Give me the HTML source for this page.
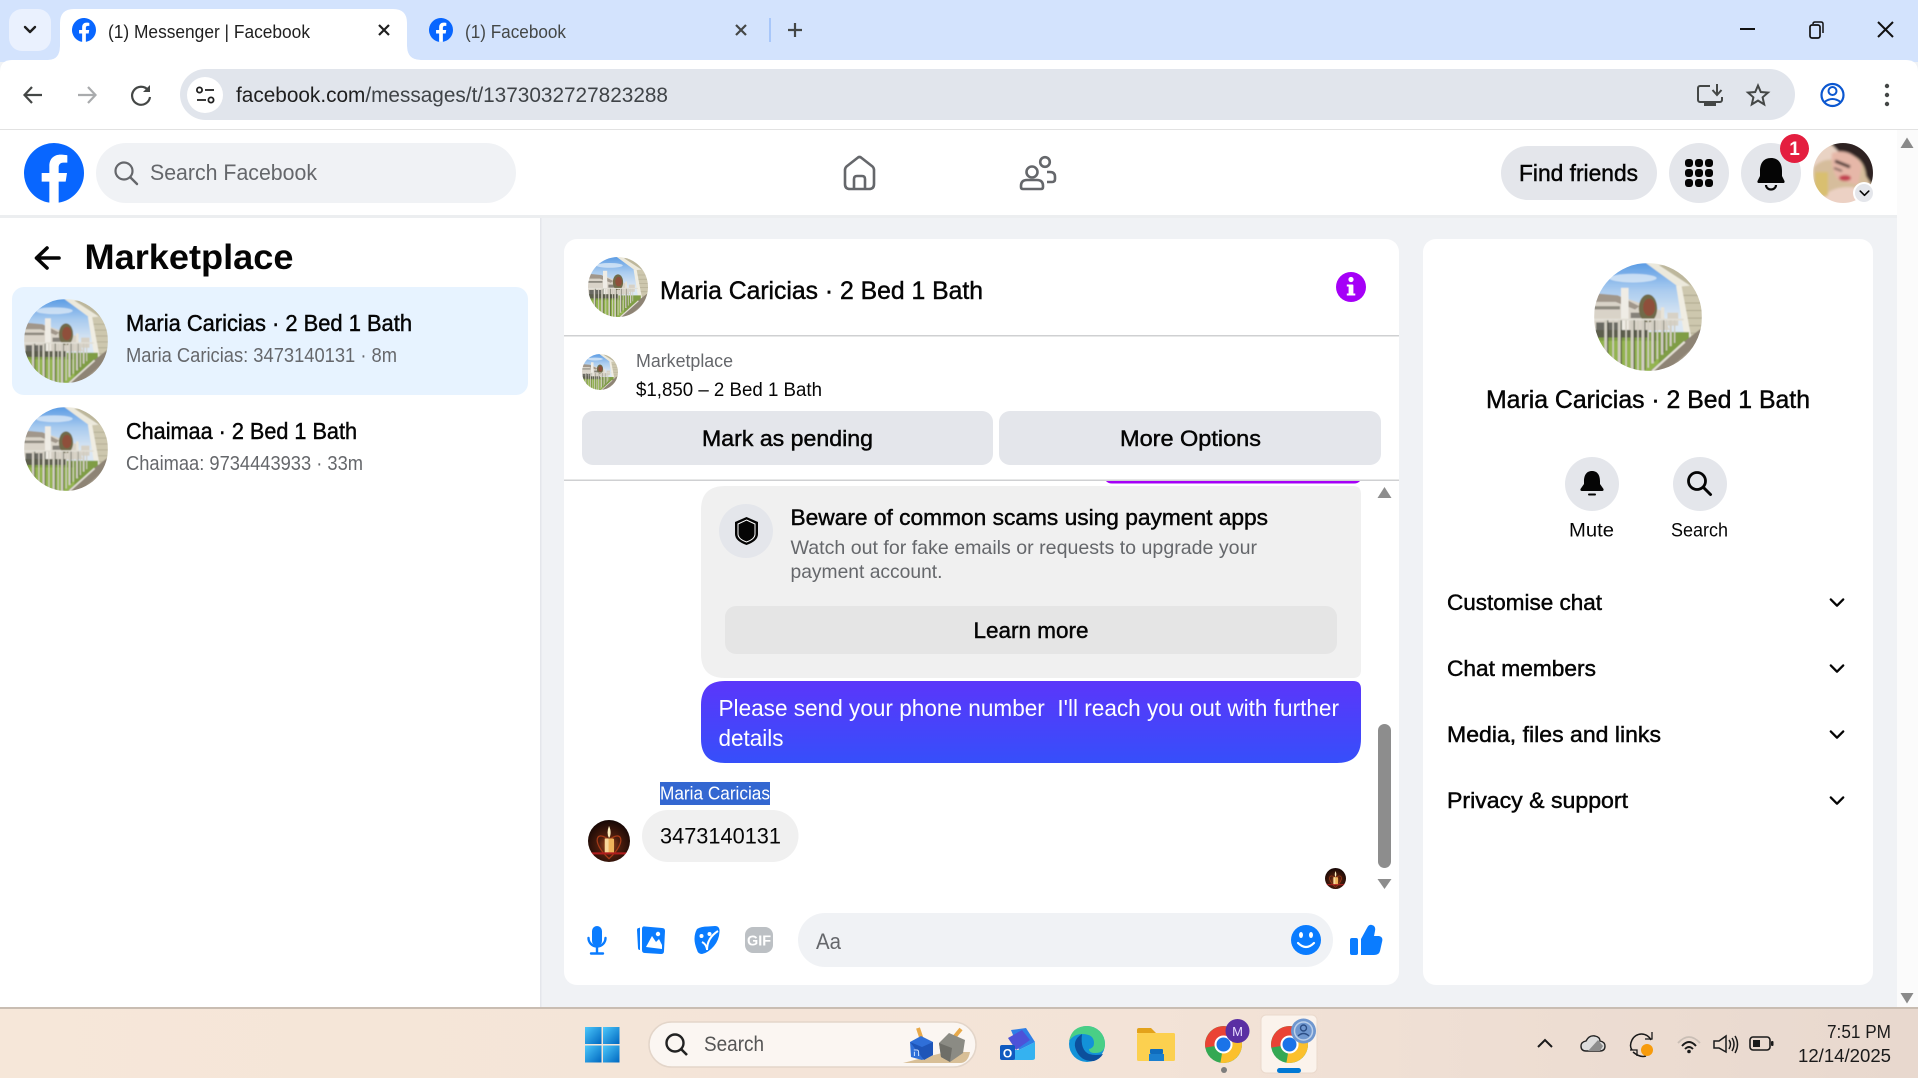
<!DOCTYPE html>
<html lang="en">
<head>
<meta charset="utf-8">
<title>(1) Messenger | Facebook</title>
<style>
html,body{margin:0;padding:0;width:1918px;height:1078px;overflow:hidden;background:#f0f2f5}
svg{display:block;font-family:"Liberation Sans",Arial,sans-serif}
.m{stroke:currentColor;stroke-width:.45}
text{white-space:pre}
</style>
</head>
<body>
<svg width="1918" height="1078" viewBox="0 0 1918 1078" xmlns="http://www.w3.org/2000/svg">
<defs>
  <linearGradient id="sky" x1="0" y1="0" x2="0" y2="1"><stop offset="0" stop-color="#5c9ce4"/><stop offset=".25" stop-color="#a9cbef"/><stop offset=".5" stop-color="#dbe7f3"/></linearGradient>
  <linearGradient id="bub" x1="0" y1="0" x2="0" y2="1"><stop offset="0" stop-color="#5b36fa"/><stop offset="1" stop-color="#364ffa"/></linearGradient>
  <linearGradient id="tb" x1="0" y1="0" x2="1" y2="0"><stop offset="0" stop-color="#f6e7d9"/><stop offset=".6" stop-color="#f3e3d7"/><stop offset="1" stop-color="#e8d8ce"/></linearGradient>
  <linearGradient id="win" x1="0" y1="0" x2="1" y2="1"><stop offset="0" stop-color="#4cc8fb"/><stop offset="1" stop-color="#0067c0"/></linearGradient>
  <radialGradient id="candle" cx=".5" cy=".6" r=".6"><stop offset="0" stop-color="#a84e1c"/><stop offset=".4" stop-color="#4e1e0e"/><stop offset="1" stop-color="#150705"/></radialGradient>
  <filter id="b1"><feGaussianBlur stdDeviation=".55"/></filter>
  <filter id="b2"><feGaussianBlur stdDeviation="1.3"/></filter>
  <clipPath id="c100"><circle cx="50" cy="50" r="50"/></clipPath>
  <clipPath id="cav"><circle cx="1843" cy="173" r="30"/></clipPath>

  <symbol id="house" viewBox="0 0 100 100">
    <g clip-path="url(#c100)"><g filter="url(#b1)">
      <rect width="100" height="100" fill="url(#sky)"/>
      <ellipse cx="36" cy="14" rx="22" ry="4" fill="#e6eff8" opacity=".7"/>
      <!-- building -->
      <path d="M0 32 L22 30 L62 44 L70 62 L0 64Z" fill="#d9d3c8"/>
      <path d="M0 28 L22 30 L42 40 L38 43 L20 36 L0 36Z" fill="#a1978b"/>
      <rect x="0" y="40" width="24" height="3" fill="#8e8a80"/>
      <rect x="2" y="55" width="24" height="10" fill="#6b6a64"/>
      <rect x="34" y="46" width="12" height="5" fill="#86827a"/>
      <rect x="25" y="23" width="7" height="40" fill="#efece5"/>
      <!-- tree -->
      <ellipse cx="50" cy="42" rx="8.5" ry="13" fill="#6f6a48"/>
      <ellipse cx="51" cy="41" rx="5.5" ry="8" fill="#8f4f3a"/>
      <rect x="62" y="41" width="3" height="14" fill="#e8e3d7"/>
      <rect x="68" y="46" width="10" height="12" fill="#d7d1c6"/>
      <!-- soffit + siding -->
      <path d="M48 0 L100 0 L100 36 L78 22Z" fill="#ece9dc"/>
      <path d="M60 2 L100 28 V12 L78 0Z" fill="#bdb79c"/>
      <path d="M78 22 L100 20 V72 L88 72Z" fill="#cdc7ae"/>
      <path d="M82 30 H100 M83 37 H100 M84 44 H100 M85 51 H100 M86 58 H100 M87 65 H100" stroke="#aea88f" stroke-width=".9"/>
      <path d="M76 21 L81 21 L91 74 L85 76Z" fill="#f0ede2"/>
      <!-- ground -->
      <rect x="0" y="64" width="88" height="36" fill="#7f9d44"/>
      <rect x="0" y="72" width="60" height="28" fill="#93b44f"/>
      <rect x="0" y="62" width="50" height="7" fill="#5d5f4e"/>
      <path d="M52 100 L82 74 L100 60 V100Z" fill="#8e8475"/>
      <path d="M68 100 L100 72 M80 100 L100 84" stroke="#a69c8c" stroke-width="1.4"/>
      <!-- rail -->
      <rect x="0" y="51.5" width="83" height="1.8" fill="#e2dfd6"/>
      <g fill="#44473a" opacity=".65">
        <rect x="12" y="53" width="1.4" height="42"/><rect x="24.5" y="53" width="1.4" height="45"/><rect x="36.5" y="53" width="1.4" height="46"/>
        <rect x="46.5" y="53" width="1.2" height="46"/><rect x="55.5" y="53" width="1.2" height="38"/><rect x="64" y="53" width="1" height="30"/>
      </g>
      <g fill="#d2cec2">
        <rect x="9.5" y="53" width="2.6" height="42"/><rect x="17" y="53" width="1.4" height="44"/><rect x="22" y="53" width="2.6" height="45"/>
        <rect x="29" y="53" width="1.4" height="46"/><rect x="34" y="53" width="2.6" height="47"/><rect x="40" y="53" width="1.4" height="47"/>
        <rect x="44" y="53" width="2.6" height="47"/><rect x="49.5" y="53" width="1.4" height="44"/><rect x="53" y="53" width="2.4" height="40"/>
        <rect x="58" y="53" width="1.4" height="36"/><rect x="62" y="53" width="2.2" height="32"/><rect x="66.5" y="53" width="1.3" height="28"/><rect x="70" y="53" width="2" height="24"/><rect x="74" y="53" width="1.3" height="21"/>
      </g>
      <path d="M54 100 L84 73" stroke="#e3dfd4" stroke-width="2"/>
    </g></g>
  </symbol>

  <symbol id="candleAv" viewBox="0 0 100 100">
    <g clip-path="url(#c100)">
      <rect width="100" height="100" fill="url(#candle)"/>
      <path d="M50 48 C22 22 4 50 50 92 C96 50 78 22 50 48Z" fill="none" stroke="#a63a17" stroke-width="3"/>
      <rect x="40" y="44" width="22" height="36" rx="3" fill="#f0b45a"/>
      <rect x="40" y="44" width="9" height="36" fill="#f8d89a"/>
      <path d="M50 14 Q58 32 50 43 Q43 32 50 14Z" fill="#fff0c0"/>
      <rect x="8" y="77" width="84" height="5" fill="#b01d1d"/>
    </g>
  </symbol>

  <symbol id="fb" viewBox="0 0 36 36">
    <circle cx="18" cy="18" r="17.5" fill="#fff"/>
    <path fill="#0866ff" d="M36 18a18 18 0 1 0-20.8 17.8V23.2h-4.6V18h4.6v-4c0-4.5 2.7-7 6.8-7 2 0 4 .4 4 .4v4.4h-2.3c-2.2 0-2.9 1.4-2.9 2.8V18h5l-.8 5.2h-4.2v12.6A18 18 0 0 0 36 18z"/>
  </symbol>

  <symbol id="chrome" viewBox="-18 -18 36 36">
    <circle r="18" fill="#34a853"/>
    <path d="M0 0 L-17.7 3 A18 18 0 0 1 15.6 -9 Z" fill="#ea4335"/>
    <path d="M0 0 L15.6 -9 A18 18 0 0 1 -3 17.7 Z" fill="#fbc02d"/>
    <circle r="8.8" fill="#fff"/><circle r="6.8" fill="#1a73e8"/>
  </symbol>

  <symbol id="chev" viewBox="0 0 18 12"><path d="M2 2 L9 9 L16 2" fill="none" stroke="#050505" stroke-width="2.6" stroke-linecap="round" stroke-linejoin="round"/></symbol>
</defs>

<!-- Browser tab strip -->
<rect width="1918" height="62" fill="#d3e3fd"/>
<rect x="9" y="9" width="42" height="42" rx="13" fill="#eaf1fe"/>
<path d="M25 27 L30 32 L35 27" fill="none" stroke="#1f1f1f" stroke-width="2.4" stroke-linecap="round" stroke-linejoin="round"/>
<path d="M48 60 Q60 60 60 46 V23 Q60 9 74 9 H393 Q407 9 407 23 V46 Q407 60 421 60 Z" fill="#fff"/>
<use href="#fb" x="72" y="18" width="24" height="24"/>
<text x="108" y="38" font-size="18" fill="#1f1f1f" textLength="202" lengthAdjust="spacingAndGlyphs">(1) Messenger | Facebook</text>
<path d="M379 25 L389 35 M389 25 L379 35" stroke="#1f1f1f" stroke-width="2.2"/>
<use href="#fb" x="429" y="18" width="24" height="24"/>
<text x="465" y="38" font-size="18" fill="#444746" textLength="101" lengthAdjust="spacingAndGlyphs">(1) Facebook</text>
<path d="M736 25 L746 35 M746 25 L736 35" stroke="#444746" stroke-width="2.2"/>
<rect x="769" y="18" width="2" height="24" fill="#a8c7fa"/>
<path d="M788 30 H802 M795 23 V37" stroke="#444746" stroke-width="2.2"/>
<!-- Window controls -->
<rect x="1740" y="28" width="15" height="2" fill="#111"/>
<rect x="1810" y="25" width="10" height="13" rx="2" fill="none" stroke="#111" stroke-width="1.7"/>
<path d="M1813 24 Q1813 22 1815 22 H1821 Q1823 22 1823 24 V33" fill="none" stroke="#111" stroke-width="1.5"/>
<path d="M1878 22 L1893 37 M1893 22 L1878 37" stroke="#111" stroke-width="2"/>

<!-- Browser toolbar -->
<path d="M0 72 Q0 60 12 60 H1906 Q1918 60 1918 72 V129 H0Z" fill="#fff"/>
<path d="M48 60 Q60 60 60 46 V60Z M421 60 Q407 60 407 46 V60Z" fill="#fff"/>
<rect x="0" y="129" width="1918" height="1.5" fill="#e2e2e2"/>
<path d="M42 95 H25 M32 87 L24.5 95 L32 103" fill="none" stroke="#444746" stroke-width="2.2"/>
<path d="M78 95 H95 M88 87 L95.5 95 L88 103" fill="none" stroke="#a9abad" stroke-width="2.2"/>
<path d="M148 90 A9 9 0 1 0 150 97" fill="none" stroke="#444746" stroke-width="2.2"/>
<path d="M150 85 V92 H143Z" fill="#444746"/>
<rect x="180" y="69" width="1615" height="51" rx="25.5" fill="#e1e5ec"/>
<circle cx="205" cy="95" r="18" fill="#fff"/>
<circle cx="199.5" cy="90" r="2.6" fill="none" stroke="#1f1f1f" stroke-width="1.8"/>
<path d="M205 90 H214 M197 100 H206" stroke="#1f1f1f" stroke-width="1.8"/>
<circle cx="211" cy="100" r="2.6" fill="none" stroke="#1f1f1f" stroke-width="1.8"/>
<text x="236" y="102" font-size="21" fill="#1f1f1f" textLength="432" lengthAdjust="spacingAndGlyphs">facebook.com<tspan fill="#3f4347">/messages/t/1373032727823288</tspan></text>
<path d="M1710 86 H1700 a2 2 0 0 0-2 2 V100 a2 2 0 0 0 2 2 H1720 a2 2 0 0 0 2-2 V97" fill="none" stroke="#444746" stroke-width="2"/>
<rect x="1704" y="103" width="12" height="3" fill="#444746"/>
<path d="M1717 84 V94 M1712.5 90 L1717 95 L1721.5 90" fill="none" stroke="#444746" stroke-width="2"/>
<path d="M1758 85.5 L1760.8 92 L1768 92.6 L1762.6 97.3 L1764.2 104.4 L1758 100.6 L1751.8 104.4 L1753.4 97.3 L1748 92.6 L1755.2 92Z" fill="none" stroke="#444746" stroke-width="2"/>
<circle cx="1832.5" cy="95" r="11" fill="none" stroke="#0b57d0" stroke-width="2.2"/>
<circle cx="1832.5" cy="91" r="4" fill="none" stroke="#0b57d0" stroke-width="2"/>
<path d="M1824.5 102 Q1832.5 96 1840.5 102" fill="none" stroke="#0b57d0" stroke-width="2"/>
<g fill="#444746"><circle cx="1887" cy="86" r="2.2"/><circle cx="1887" cy="95" r="2.2"/><circle cx="1887" cy="104" r="2.2"/></g>

<!-- Page -->
<rect x="0" y="130" width="1897" height="878" fill="#f0f2f5"/>
<rect x="1897" y="130" width="21" height="878" fill="#fbfbfb"/>
<rect x="0" y="216" width="540" height="792" fill="#fff"/>
<rect x="540" y="216" width="1.5" height="792" fill="#e4e6eb"/>
<!-- FB header -->
<rect x="0" y="130" width="1897" height="85" fill="#fff"/>
<rect x="0" y="215" width="1897" height="3" fill="#eceef0"/>
<use href="#fb" x="24" y="143" width="60" height="60"/>
<rect x="96" y="143" width="420" height="60" rx="30" fill="#f0f2f5"/>
<circle cx="124" cy="171" r="8.5" fill="none" stroke="#65676b" stroke-width="2.2"/>
<path d="M130.5 177.5 L137 184" stroke="#65676b" stroke-width="2.4" stroke-linecap="round"/>
<text x="150" y="180" font-size="22" fill="#65676b" textLength="167" lengthAdjust="spacingAndGlyphs">Search Facebook</text>
<path d="M845 170 Q845 168 846.5 166.5 L858 157.5 Q859.5 156.5 861 157.5 L872.5 166.5 Q874 168 874 170 V184 Q874 189 869 189 H850 Q845 189 845 184Z" fill="none" stroke="#65676b" stroke-width="2.6" stroke-linejoin="round"/>
<path d="M854 189 V179 Q854 176 857 176 H862 Q865 176 865 179 V189" fill="none" stroke="#65676b" stroke-width="2.6"/>
<circle cx="1032" cy="172" r="5.5" fill="none" stroke="#65676b" stroke-width="2.6"/>
<circle cx="1045" cy="162" r="4.8" fill="none" stroke="#65676b" stroke-width="2.6"/>
<path d="M1027 180 H1037 Q1043 180 1043 186 V187 Q1043 189 1041 189 H1023 Q1021 189 1021 187 V186 Q1021 180 1027 180Z" fill="none" stroke="#65676b" stroke-width="2.6"/>
<path d="M1047 172 H1050 Q1055 172 1055 177 V179 Q1055 182 1052 182 H1047" fill="none" stroke="#65676b" stroke-width="2.6"/>
<rect x="1501" y="146" width="156" height="54" rx="27" fill="#e4e6eb"/>
<text class="m" x="1519" y="181" font-size="23" fill="#050505" color="#050505" textLength="119" lengthAdjust="spacingAndGlyphs">Find friends</text>
<circle cx="1699" cy="173" r="30" fill="#e4e6eb"/>
<g fill="#050505">
  <rect x="1685" y="159" width="8" height="8" rx="3"/><rect x="1695" y="159" width="8" height="8" rx="3"/><rect x="1705" y="159" width="8" height="8" rx="3"/>
  <rect x="1685" y="169" width="8" height="8" rx="3"/><rect x="1695" y="169" width="8" height="8" rx="3"/><rect x="1705" y="169" width="8" height="8" rx="3"/>
  <rect x="1685" y="179" width="8" height="8" rx="3"/><rect x="1695" y="179" width="8" height="8" rx="3"/><rect x="1705" y="179" width="8" height="8" rx="3"/>
</g>
<circle cx="1771" cy="173" r="30" fill="#e4e6eb"/>
<path d="M1771 158 C1763 158 1760 164 1760 171 V176 L1757.5 181 Q1757 183 1759 183 H1783 Q1785 183 1784.5 181 L1782 176 V171 C1782 164 1779 158 1771 158Z" fill="#050505"/>
<path d="M1766 185 A5 4.5 0 0 0 1776 185" fill="none" stroke="#050505" stroke-width="2.2"/>
<circle cx="1794.5" cy="148.5" r="14.5" fill="#e41e3f"/>
<text x="1794.5" y="155" font-size="19" font-weight="bold" fill="#fff" text-anchor="middle">1</text>
<!-- profile avatar -->
<g clip-path="url(#cav)"><g filter="url(#b2)">
  <rect x="1813" y="143" width="60" height="60" fill="#d6bd9c"/>
  <path d="M1813 150 Q1830 140 1845 152 L1835 160 Q1822 158 1813 168Z" fill="#e9d3c4"/>
  <path d="M1828 141 H1875 V190 L1866 176 Q1864 154 1840 153Z" fill="#2e2222"/>
  <path d="M1832 153 Q1850 147 1862 165 L1858 185 L1838 180 Q1830 168 1832 153Z" fill="#e6b7a8"/>
  <path d="M1835 161 L1850 167" stroke="#2e1f1f" stroke-width="3"/>
  <path d="M1834 168 L1842 171" stroke="#3a2a2a" stroke-width="1.6"/>
  <ellipse cx="1845" cy="178" rx="6" ry="3" fill="#c23f50"/>
  <ellipse cx="1848" cy="200" rx="24" ry="13" fill="#ecd1c4"/>
  <rect x="1815" y="172" width="13" height="24" fill="#d9bf70"/>
</g></g>
<circle cx="1864" cy="193" r="11" fill="#fff"/>
<circle cx="1864" cy="193" r="9" fill="#e4e6eb"/>
<use href="#chev" x="1859" y="189.5" width="11" height="8"/>
<!-- page scrollbar arrows -->
<path d="M1907 137.5 L1913.5 148 H1900.5Z" fill="#8a8a8a"/>
<path d="M1900.5 993 H1913.5 L1907 1003.5Z" fill="#8a8a8a"/>

<!-- Left sidebar -->
<path d="M36.5 258 H59 M47 248 L36.5 258 L47 268" fill="none" stroke="#050505" stroke-width="3.6" stroke-linecap="round" stroke-linejoin="round"/>
<text x="84.5" y="269" font-size="35" font-weight="bold" fill="#050505" textLength="209" lengthAdjust="spacingAndGlyphs">Marketplace</text>
<rect x="12" y="287" width="516" height="108" rx="12" fill="#e7f3ff"/>
<use href="#house" x="24" y="299" width="84" height="84"/>
<text class="m" x="126" y="331" font-size="23" fill="#050505" color="#050505" textLength="286" lengthAdjust="spacingAndGlyphs">Maria Caricias · 2 Bed 1 Bath</text>
<text x="126" y="362" font-size="20" fill="#65676b" textLength="271" lengthAdjust="spacingAndGlyphs">Maria Caricias: 3473140131 · 8m</text>
<use href="#house" x="24" y="407" width="84" height="84"/>
<text class="m" x="126" y="439" font-size="23" fill="#050505" color="#050505" textLength="231" lengthAdjust="spacingAndGlyphs">Chaimaa · 2 Bed 1 Bath</text>
<text x="126" y="470" font-size="20" fill="#65676b" textLength="237" lengthAdjust="spacingAndGlyphs">Chaimaa: 9734443933 · 33m</text>

<!-- Chat card -->
<rect x="564" y="239" width="835" height="746" rx="13" fill="#fff"/>
<use href="#house" x="588" y="257" width="60" height="60"/>
<text class="m" x="660" y="299" font-size="25" fill="#050505" color="#050505" textLength="323" lengthAdjust="spacingAndGlyphs">Maria Caricias · 2 Bed 1 Bath</text>
<circle cx="1351" cy="287" r="15" fill="#a500f7"/>
<circle cx="1351" cy="279.5" r="2.6" fill="#fff"/>
<rect x="1348.6" y="284.5" width="4.8" height="10.5" rx="1" fill="#fff"/>
<rect x="1346.8" y="284.5" width="4" height="2" fill="#fff"/>
<rect x="1346.8" y="293.5" width="8.5" height="2" fill="#fff"/>
<rect x="564" y="335" width="835" height="1.5" fill="#cfd0d2"/>
<use href="#house" x="582" y="354" width="36" height="36"/>
<text x="636" y="367" font-size="18" fill="#65676b" textLength="97" lengthAdjust="spacingAndGlyphs">Marketplace</text>
<text x="636" y="396" font-size="19" fill="#050505" textLength="186" lengthAdjust="spacingAndGlyphs">$1,850 – 2 Bed 1 Bath</text>
<rect x="582" y="411" width="411" height="54" rx="11" fill="#e4e6eb"/>
<rect x="999" y="411" width="382" height="54" rx="11" fill="#e4e6eb"/>
<text class="m" x="702" y="446" font-size="22" fill="#050505" color="#050505" textLength="171" lengthAdjust="spacingAndGlyphs">Mark as pending</text>
<text class="m" x="1120" y="446" font-size="22" fill="#050505" color="#050505" textLength="141" lengthAdjust="spacingAndGlyphs">More Options</text>
<rect x="564" y="479.5" width="835" height="1.5" fill="#cfd0d2"/>
<path d="M1106 481 H1360 Q1358 483.5 1354 483.5 H1112 Q1108 483.5 1106 481Z" fill="#a500f7"/>

<!-- Scam notice -->
<path d="M725 486 H1353 Q1361 486 1361 494 V670 Q1361 678 1353 678 H725 Q701 678 701 654 V510 Q701 486 725 486Z" fill="#f0f0f0"/>
<circle cx="746" cy="531" r="27" fill="#e4e6eb"/>
<path d="M746.5 517 L758 522 V534 Q758 541 746.5 545 Q735 541 735 534 V522Z" fill="#050505"/>
<path d="M746.5 520 L755 524 V534 Q755 539 746.5 542 Q738 539 738 534 V524Z" fill="none" stroke="#fff" stroke-width="1"/>
<text class="m" x="790.5" y="525" font-size="22" fill="#050505" color="#050505" textLength="477.5" lengthAdjust="spacingAndGlyphs">Beware of common scams using payment apps</text>
<text x="790.5" y="554" font-size="19.5" fill="#65676b" textLength="466.5" lengthAdjust="spacingAndGlyphs">Watch out for fake emails or requests to upgrade your</text>
<text x="790.5" y="578" font-size="19.5" fill="#65676b" textLength="152" lengthAdjust="spacingAndGlyphs">payment account.</text>
<rect x="725" y="606" width="612" height="48" rx="11" fill="#e5e5e5"/>
<text class="m" x="973.5" y="638" font-size="22" fill="#050505" color="#050505" textLength="115" lengthAdjust="spacingAndGlyphs">Learn more</text>

<!-- Blue bubble -->
<path d="M725 681 H1353 Q1361 681 1361 689 V739 Q1361 763 1337 763 H725 Q701 763 701 739 V705 Q701 681 725 681Z" fill="url(#bub)"/>
<text x="718.5" y="716" font-size="23" fill="#fff" textLength="620.5" lengthAdjust="spacingAndGlyphs">Please send your phone number&#160;&#160;I'll reach you out with further</text>
<text x="718.5" y="746" font-size="23" fill="#fff" textLength="65" lengthAdjust="spacingAndGlyphs">details</text>

<!-- Incoming -->
<rect x="660" y="782" width="110" height="23" fill="#3367d1"/>
<text x="660" y="799.5" font-size="18" fill="#fff" textLength="110" lengthAdjust="spacingAndGlyphs">Maria Caricias</text>
<use href="#candleAv" x="588" y="820" width="42" height="42"/>
<rect x="642" y="810" width="156.5" height="52" rx="26" fill="#f0f0f0"/>
<text x="660" y="843.5" font-size="22" fill="#050505" textLength="121" lengthAdjust="spacingAndGlyphs">3473140131</text>
<use href="#candleAv" x="1325" y="868" width="21" height="21"/>

<!-- Chat scrollbar -->
<path d="M1384.5 487 L1391.5 498 H1377.5Z" fill="#8d8d8d"/>
<rect x="1378" y="724" width="13" height="144" rx="6.5" fill="#8d8d8d"/>
<path d="M1377.5 879 H1391.5 L1384.5 889Z" fill="#8d8d8d"/>

<!-- Composer -->
<rect x="592" y="926" width="10" height="20" rx="5" fill="#0a7cff"/>
<path d="M588.5 938 A8.5 8.5 0 0 0 605.5 938 M597 947 V953 M591 953.5 H603" fill="none" stroke="#0a7cff" stroke-width="2.4" stroke-linecap="round"/>
<path d="M637 930 Q637 928 639 928 L640 927.5 V950 Q638 950 638 948Z" fill="#0a7cff"/>
<path d="M645 926.5 L662 928 Q665 928 665 931 L664 951 Q664 954 661 954 L645 953 Q642 953 642 950 V929 Q642 926 645 926.5Z" fill="#0a7cff"/>
<circle cx="658" cy="934" r="2.2" fill="#fff"/>
<path d="M646 947 L652 936 L656 942 L659 939 L662 945 V949Z" fill="#fff"/>
<path d="M697 929 Q701 926.5 708 926.5 L715 926 Q720 926 719.5 932 Q719 940 714 946 Q708 953 702 954 Q698 954 697 950 Q692 938 697 929Z" fill="#0a7cff"/>
<circle cx="701.5" cy="936" r="2" fill="#fff"/><circle cx="709.5" cy="934" r="2" fill="#fff"/>
<path d="M702 942 Q706 944 707 949 M707 950 Q707 938 718 931" fill="none" stroke="#fff" stroke-width="2"/>
<rect x="745" y="927" width="28" height="26" rx="8" fill="#bcc0c4"/>
<text x="747" y="945.5" font-size="15" font-weight="bold" fill="#fff" textLength="24" lengthAdjust="spacingAndGlyphs">GIF</text>
<rect x="798" y="913" width="535" height="54" rx="27" fill="#f0f2f5"/>
<text x="816" y="949" font-size="22" fill="#65676b" textLength="25" lengthAdjust="spacingAndGlyphs">Aa</text>
<circle cx="1306" cy="940" r="15" fill="#0a7cff"/>
<ellipse cx="1301" cy="935" rx="2" ry="3" fill="#fff"/><ellipse cx="1311" cy="935" rx="2" ry="3" fill="#fff"/>
<path d="M1298 943 Q1306 951 1314 943" fill="none" stroke="#fff" stroke-width="2.2" stroke-linecap="round"/>
<rect x="1350" y="938" width="8" height="17" rx="2" fill="#0a7cff"/>
<path d="M1361 939 L1367 928 Q1369 924 1372 925 Q1376 926 1375 931 L1374 936 H1379 Q1383.5 937 1382 942 L1380 951 Q1379 955 1374 955 H1361Z" fill="#0a7cff"/>

<!-- Right panel -->
<rect x="1423" y="239" width="450" height="746" rx="13" fill="#fff"/>
<use href="#house" x="1594" y="263" width="108" height="108"/>
<text class="m" x="1486" y="408" font-size="25" fill="#050505" color="#050505" textLength="324" lengthAdjust="spacingAndGlyphs">Maria Caricias · 2 Bed 1 Bath</text>
<circle cx="1592" cy="484" r="27" fill="#e4e6eb"/>
<path d="M1592 471 C1586 471 1584 476 1584 481 V484 L1580.5 489 Q1580 491 1582 491 H1602 Q1604 491 1603.5 489 L1600 484 V481 C1600 476 1598 471 1592 471Z" fill="#050505"/>
<rect x="1588" y="493.5" width="8" height="2" rx="1" fill="#050505"/>
<circle cx="1700" cy="484" r="27" fill="#e4e6eb"/>
<circle cx="1697" cy="481" r="8.5" fill="none" stroke="#050505" stroke-width="2.8"/>
<path d="M1703.5 487.5 L1710.5 494.5" stroke="#050505" stroke-width="3" stroke-linecap="round"/>
<text x="1569" y="536.5" font-size="19" fill="#050505" textLength="45" lengthAdjust="spacingAndGlyphs">Mute</text>
<text x="1671" y="536.5" font-size="19" fill="#050505" textLength="57" lengthAdjust="spacingAndGlyphs">Search</text>
<text class="m" x="1447" y="610" font-size="22" fill="#050505" color="#050505" textLength="155" lengthAdjust="spacingAndGlyphs">Customise chat</text>
<text class="m" x="1447" y="676" font-size="22" fill="#050505" color="#050505" textLength="149" lengthAdjust="spacingAndGlyphs">Chat members</text>
<text class="m" x="1447" y="742" font-size="22" fill="#050505" color="#050505" textLength="214" lengthAdjust="spacingAndGlyphs">Media, files and links</text>
<text class="m" x="1447" y="808" font-size="22" fill="#050505" color="#050505" textLength="181" lengthAdjust="spacingAndGlyphs">Privacy &amp; support</text>
<use href="#chev" x="1829" y="597.5" width="16" height="11"/>
<use href="#chev" x="1829" y="663.5" width="16" height="11"/>
<use href="#chev" x="1829" y="729.5" width="16" height="11"/>
<use href="#chev" x="1829" y="795.5" width="16" height="11"/>

<!-- Taskbar -->
<rect x="0" y="1008" width="1918" height="70" fill="url(#tb)"/>
<rect x="0" y="1007" width="1918" height="2" fill="#c9bdb2"/>
<g fill="url(#win)">
  <rect x="585" y="1027" width="16.5" height="17"/><rect x="603" y="1027" width="16.5" height="17"/>
  <rect x="585" y="1045.5" width="16.5" height="17"/><rect x="603" y="1045.5" width="16.5" height="17"/>
</g>
<rect x="649" y="1022" width="327" height="45" rx="22.5" fill="#fbf6f2" stroke="#e3d5c9" stroke-width="1.5"/>
<circle cx="675" cy="1043" r="8.5" fill="none" stroke="#222" stroke-width="2.4"/>
<path d="M681 1049 L687 1055" stroke="#222" stroke-width="2.6"/>
<text x="704" y="1051" font-size="21" fill="#555" textLength="60" lengthAdjust="spacingAndGlyphs">Search</text>
<path d="M903 1063 Q930 1056 946 1052 H970 Q968 1063 960 1063Z" fill="#d8bf97"/>
<path d="M918 1028 L922 1040" stroke="#e8a94a" stroke-width="4"/>
<path d="M910 1042 L921 1036 L933 1042 L933 1055 L922 1060 L911 1057Z" fill="#2f6fd8"/>
<path d="M910 1042 L922 1047 L933 1042 L933 1055 L924 1060Z" fill="#1e55b8"/>
<text x="913" y="1056" font-size="11" fill="#cfe2ff">ה</text>
<path d="M952 1040 L961 1029" stroke="#e8a94a" stroke-width="4"/>
<path d="M939 1043 L949 1033 L965 1040 L963 1053 L950 1062 L941 1057Z" fill="#8b8b84"/>
<path d="M939 1043 L952 1048 L950 1062 L941 1057Z" fill="#6e6e68"/>
<path d="M1011 1030 L1026 1028 L1035 1042 L1019 1050Z" fill="#2f7fe6"/>
<path d="M1019 1050 L1035 1042 V1058 Q1035 1060 1032 1060 H1014 L1014 1050Z" fill="#35b2f0"/>
<path d="M1008 1038 L1022 1030 L1030 1040 L1016 1050Z" fill="#4d52d8"/>
<rect x="1000" y="1045" width="15" height="15" rx="2" fill="#0f5ac0"/>
<text x="1007.5" y="1057.5" font-size="12" font-weight="bold" fill="#fff" text-anchor="middle">O</text>
<circle cx="1087" cy="1044" r="18" fill="#1392d8"/>
<path d="M1087 1026 A18 18 0 0 1 1105 1044 Q1105 1053 1095 1053 Q1089 1053 1089 1049 Q1094 1048 1094 1043 Q1094 1034 1082 1034 Q1074 1034 1069 1041 Q1072 1026 1087 1026Z" fill="#49cf86"/>
<path d="M1082 1034 Q1072 1040 1076 1050 Q1081 1062 1094 1061 Q1100 1059 1103 1054 Q1096 1056 1089 1054 Q1080 1050 1082 1034Z" fill="#0c4f9c"/>
<path d="M1137 1030 Q1137 1028 1139 1028 H1151 L1156 1033 H1137Z" fill="#e3a21a"/>
<rect x="1137" y="1033" width="38" height="28" rx="1.5" fill="#fcd04f"/>
<rect x="1150" y="1049" width="13" height="5" rx="1" fill="#0f6cbd"/>
<rect x="1149" y="1054" width="15" height="7" fill="#1b7fce"/>
<use href="#chrome" x="1205" y="1026" width="37" height="37"/>
<circle cx="1237.5" cy="1031" r="12" fill="#5a2fa3"/>
<text x="1237.5" y="1036" font-size="13" fill="#e8dcff" text-anchor="middle">M</text>
<circle cx="1224" cy="1070" r="3" fill="#7d7d7d"/>
<rect x="1261" y="1015" width="56" height="58" rx="5" fill="#fbf3ec" stroke="#ead9cc"/>
<use href="#chrome" x="1271" y="1026" width="37" height="37"/>
<circle cx="1303.5" cy="1031" r="12.5" fill="#6f97cf"/>
<circle cx="1303.5" cy="1031" r="9" fill="none" stroke="#bcd0ea" stroke-width="1.5"/>
<circle cx="1303.5" cy="1028" r="3" fill="none" stroke="#2d4f86" stroke-width="1.4"/>
<path d="M1298 1036 Q1303.5 1031 1309 1036" fill="none" stroke="#2d4f86" stroke-width="1.4"/>
<rect x="1277" y="1068" width="24" height="5" rx="2.5" fill="#0078d4"/>
<!-- Tray -->
<path d="M1538 1047 L1545 1040 L1552 1047" fill="none" stroke="#1a1a1a" stroke-width="2"/>
<path d="M1586 1051 Q1581 1051 1581 1046 Q1581 1042 1586 1041 Q1589 1035 1595 1036 Q1600 1037 1600 1041 Q1605 1042 1605 1046 Q1605 1051 1600 1051Z" fill="#dcdcdc" stroke="#222" stroke-width="1.4"/>
<path d="M1588 1051 L1598 1040 L1603 1046 L1600 1051Z" fill="#8d8d8d"/>
<path d="M1651 1040 A10.5 10.5 0 0 0 1632 1040 Q1629 1046 1632 1050 M1633 1052 Q1640 1058 1646 1056" fill="none" stroke="#1a1a1a" stroke-width="1.5"/>
<path d="M1652 1032 V1039 H1645 M1630 1050 H1637 V1056" fill="none" stroke="#1a1a1a" stroke-width="1.3"/>
<circle cx="1647" cy="1050" r="6" fill="#f79b0c"/>
<path d="M1678 1043 Q1689 1031 1700 1043" fill="none" stroke="#c9beb5" stroke-width="1.8"/>
<path d="M1682 1046 Q1689 1038 1696 1046 M1685 1049 Q1689 1045 1693 1049" fill="none" stroke="#1a1a1a" stroke-width="1.9"/>
<circle cx="1689" cy="1051.5" r="1.8" fill="#1a1a1a"/>
<path d="M1714 1041 H1719 L1726 1036 V1052 L1719 1048 H1714Z" fill="none" stroke="#1a1a1a" stroke-width="1.5"/>
<path d="M1729 1040 Q1732 1044 1729 1049 M1732 1038 Q1736 1044 1732 1051 M1735 1036 Q1740 1044 1735 1053" fill="none" stroke="#1a1a1a" stroke-width="1.5"/>
<rect x="1750" y="1037" width="20" height="13" rx="3" fill="none" stroke="#1a1a1a" stroke-width="1.6"/>
<rect x="1753" y="1040" width="7" height="7" fill="#1a1a1a"/>
<rect x="1771" y="1041" width="2.5" height="5" rx="1" fill="#1a1a1a"/>
<text x="1827" y="1038" font-size="18" fill="#1a1a1a" textLength="64" lengthAdjust="spacingAndGlyphs">7:51 PM</text>
<text x="1798" y="1062" font-size="18" fill="#1a1a1a" textLength="93" lengthAdjust="spacingAndGlyphs">12/14/2025</text>
</svg>
</body>
</html>
